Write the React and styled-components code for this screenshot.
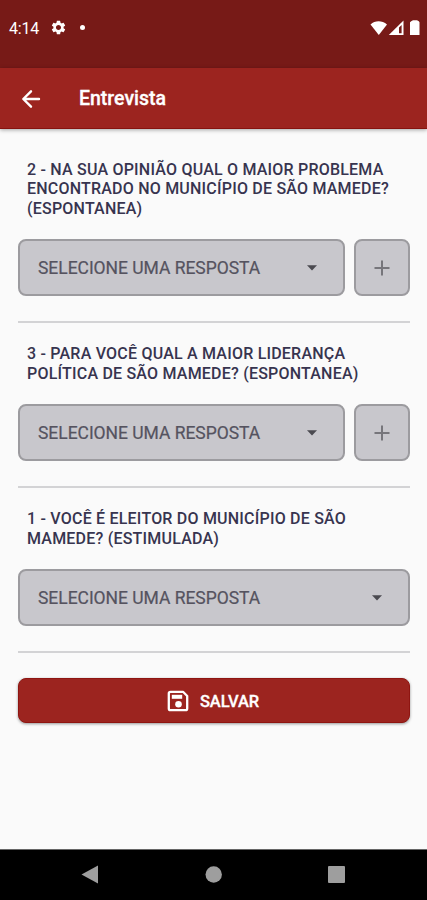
import React from 'react';
import styled, { createGlobalStyle } from 'styled-components';
import { MdSettings } from 'react-icons/md';

const GlobalStyle = createGlobalStyle`
body {
    margin: 0;
    background-color: #fafafa;
    font-family: Roboto, sans-serif;
}
* {
    box-sizing: border-box;
}
svg {
    display: block;
    flex: none;
}
`
const Screen = styled.div`
display: flex;
flex-direction: column;
width: 427px;
height: 900px;
overflow: hidden;
background-color: #fafafa;
`
const StatusBar = styled.div`
display: flex;
justify-content: space-between;
align-items: flex-start;
flex: none;
height: 68px;
padding: 18px 7px 0 9px;
background-color: #771a17;
color: white;
`
const StatusGroup = styled.div`
display: flex;
align-items: center;
height: 19px;
gap: ${props => props.$gap};
`
const Clock = styled.span`
width: 31px;
padding-top: 1px;
font-size: 16px;
line-height: 19px;
letter-spacing: -0.2px;
white-space: nowrap;
`
const Dot = styled.span`
width: 5px;
height: 5px;
margin-left: 3px;
border-radius: 50%;
background-color: white;
`
const Header = styled.header`
display: flex;
align-items: center;
flex: none;
height: 61px;
padding: 1px 21px 0;
gap: 38px;
background-color: #9c241f;
border-bottom: 1px solid #86130f;
box-shadow: 0 1px 4px rgba(0, 0, 0, 0.35);
z-index: 1;
`
const Title = styled.h1`
margin: 0;
padding-top: 1px;
font-size: 19.5px;
font-weight: 500;
line-height: 24px;
color: white;
-webkit-text-stroke: 0.3px white;
`
const Content = styled.main`
flex: 1;
padding: 31px 17px 0 18px;
`
const Question = styled.section`
padding-bottom: 25px;
margin-bottom: 21px;
border-bottom: 2px solid #d3d3d5;
&:last-of-type {
    margin-bottom: 25px;
}
`
const QuestionText = styled.p`
margin: 0 0 21.2px;
padding-left: 9px;
font-size: 16px;
font-weight: 500;
line-height: 19.4px;
letter-spacing: 0.21px;
color: #37344f;
white-space: pre;
`
const AnswerRow = styled.div`
display: flex;
gap: 9px;
`
const SelectBox = styled.button`
display: flex;
justify-content: space-between;
align-items: center;
flex: 1;
height: 57px;
padding: 0 26px 0 18px;
border: 2px solid #9c9b9f;
border-radius: 8px;
background-color: #c8c7cc;
color: #55535f;
font-family: inherit;
font-size: 17.5px;
letter-spacing: -0.04px;
-webkit-text-stroke: 0.2px #55535f;
`
const AddButton = styled.button`
display: flex;
justify-content: center;
align-items: center;
width: 56px;
height: 57px;
padding: 0;
border: 2px solid #9c9b9f;
border-radius: 8px;
background-color: #c8c7cc;
`
const SaveButton = styled.button`
display: flex;
justify-content: center;
align-items: center;
gap: 11px;
width: 100%;
height: 45px;
padding: 1px 2px 0 0;
border: 1px solid #8f1511;
border-radius: 8px;
background-color: #9c241f;
box-shadow: 0 1px 3px rgba(0, 0, 0, 0.4);
color: white;
font-family: inherit;
font-size: 16.5px;
font-weight: 500;
letter-spacing: -0.1px;
-webkit-text-stroke: 0.3px white;
`
const NavBar = styled.nav`
display: flex;
align-items: center;
flex: none;
height: 51px;
padding: 0 82px 2px 81px;
justify-content: space-between;
border-top: 1px solid #666;
background-color: black;
`

const questions = [
    {
        id: 2,
        text: '2 - NA SUA OPINIÃO QUAL O MAIOR PROBLEMA\nENCONTRADO NO MUNICÍPIO DE SÃO MAMEDE?\n(ESPONTANEA)',
        canAdd: true,
    },
    {
        id: 3,
        text: '3 - PARA VOCÊ QUAL A MAIOR LIDERANÇA\nPOLÍTICA DE SÃO MAMEDE? (ESPONTANEA)',
        canAdd: true,
    },
    {
        id: 1,
        text: '1 - VOCÊ É ELEITOR DO MUNICÍPIO DE SÃO\nMAMEDE? (ESTIMULADA)',
        canAdd: false,
    },
]

const BackIcon = () => (
    <svg width="20" height="20" viewBox="0 0 20 20" fill="none" stroke="white" strokeWidth="2.4" strokeLinecap="round" strokeLinejoin="round">
        <path d="M18 10H2.8M10 2.3L2.3 10L10 17.7" />
    </svg>
)

const SignalIcons = () => (
    <svg width="50" height="16" viewBox="0 0 50 16" fill="white">
        <path d="M0.5 4.5C5 0.2 12 0.2 17 4.5L8.8 15Z" />
        <path d="M33.5 0.5V15H18.8Z" />
        <path d="M29 7.5L31.6 5.1V13.3H29Z" fill="#771a17" />
        <path d="M41.2 1.3L43 0.3H47L48.8 1.3L49.5 2.2V15H40V2.2Z" />
    </svg>
)

const SaveIcon = () => (
    <svg width="22" height="22" viewBox="0 0 22 22" fill="none">
        <path d="M3.5 1.8H16L20.2 6V18.5Q20.2 20.2 18.5 20.2H3.5Q1.8 20.2 1.8 18.5V3.5Q1.8 1.8 3.5 1.8Z" stroke="white" strokeWidth="2.3" strokeLinejoin="round" />
        <path d="M4.8 4.8H15.2V8.8H4.8Z" fill="white" />
        <circle cx="11.5" cy="14.2" r="3.3" fill="white" />
    </svg>
)

const App = () => {

    return (
        <>
            <GlobalStyle />
            <Screen>
                <StatusBar>
                    <StatusGroup $gap="10px">
                        <Clock>4:14</Clock>
                        <MdSettings size={17} />
                        <Dot />
                    </StatusGroup>
                    <StatusGroup $gap="0">
                        <SignalIcons />
                    </StatusGroup>
                </StatusBar>
                <Header>
                    <BackIcon />
                    <Title>Entrevista</Title>
                </Header>
                <Content>
                    {questions.map(question => (
                        <Question key={question.id}>
                            <QuestionText>{question.text}</QuestionText>
                            <AnswerRow>
                                <SelectBox>
                                    SELECIONE UMA RESPOSTA
                                    <svg width="10" height="6" viewBox="0 0 10 6">
                                        <path d="M0 0.3H10L5 5.5Z" fill="#4b4a50" />
                                    </svg>
                                </SelectBox>
                                {question.canAdd && (
                                    <AddButton>
                                        <svg width="16" height="16" viewBox="0 0 16 16" stroke="#77767b" strokeWidth="2">
                                            <path d="M8 0.5V15.5M0.5 8H15.5" />
                                        </svg>
                                    </AddButton>
                                )}
                            </AnswerRow>
                        </Question>
                    ))}
                    <SaveButton>
                        <SaveIcon />
                        SALVAR
                    </SaveButton>
                </Content>
                <NavBar>
                    <svg width="17" height="19" viewBox="0 0 17 19">
                        <path d="M0.5 9.5L17 0.5V18.5Z" fill="#9e9e9e" />
                    </svg>
                    <svg width="17" height="17" viewBox="0 0 17 17">
                        <circle cx="8.7" cy="8.5" r="8.2" fill="#9e9e9e" />
                    </svg>
                    <svg width="17" height="17" viewBox="0 0 17 17">
                        <rect width="17" height="17" rx="1" fill="#9e9e9e" />
                    </svg>
                </NavBar>
            </Screen>
        </>
    )
}

export default App;
